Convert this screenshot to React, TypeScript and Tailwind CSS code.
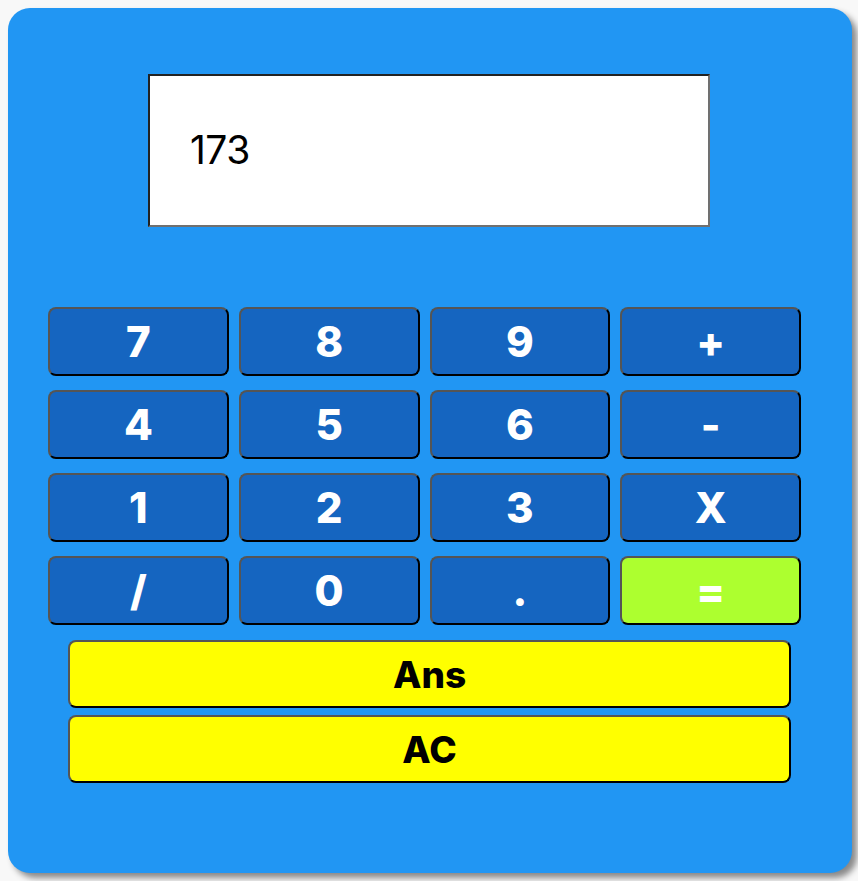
import React, { useState } from 'react';

const keys = ['7', '8', '9', '+', '4', '5', '6', '-', '1', '2', '3', 'X', '/', '0', '.', '='];

const App = () => {
  const [display] = useState('173');

  return (
    <div className="min-h-[881px] bg-[#f8f8f8] pt-2 px-2" style={{ fontFamily: 'Inter, "Noto Sans", sans-serif' }}>
      <div className="w-[844px] h-[865px] rounded-[22px] bg-[#2196f3] shadow-[5px_5px_6px_rgba(0,0,0,0.45)] pt-[66px]">
        {/* pantalla */}
        <div className="ml-[140px] w-[562px] h-[153px] bg-white border-2 border-t-[#222] border-l-[#222] border-r-[#707070] border-b-[#707070] flex items-center pl-[40px]">
          <span className="text-[39px] text-black font-normal tracking-[-0.5px]">{display}</span>
        </div>

        <div className="ml-[40px] mt-[80px] w-[753px] grid grid-cols-4 gap-x-[10px] gap-y-[14px]">
          {keys.map((k) => (
            <button
              key={k}
              className={`h-[69px] rounded-lg border-2 border-t-[#555] border-l-[#555] border-r-black border-b-black text-white text-[42px] font-extrabold leading-none flex items-center justify-center ${
                k === '=' ? 'bg-[#adff2f]' : 'bg-[#1565c0]'
              }`}
            >
              {k}
            </button>
          ))}
        </div>

        <div className="ml-[60px] mt-[15px] w-[723px] flex flex-col gap-[7px]">
          <button className="h-[68px] rounded-lg bg-[#ffff00] border-2 border-t-[#555] border-l-[#555] border-r-black border-b-black text-black text-[37px] font-extrabold leading-none">
            Ans
          </button>
          <button className="h-[68px] rounded-lg bg-[#ffff00] border-2 border-t-[#555] border-l-[#555] border-r-black border-b-black text-black text-[37px] font-extrabold leading-none">
            AC
          </button>
        </div>
      </div>
    </div>
  );
};

export default App;
